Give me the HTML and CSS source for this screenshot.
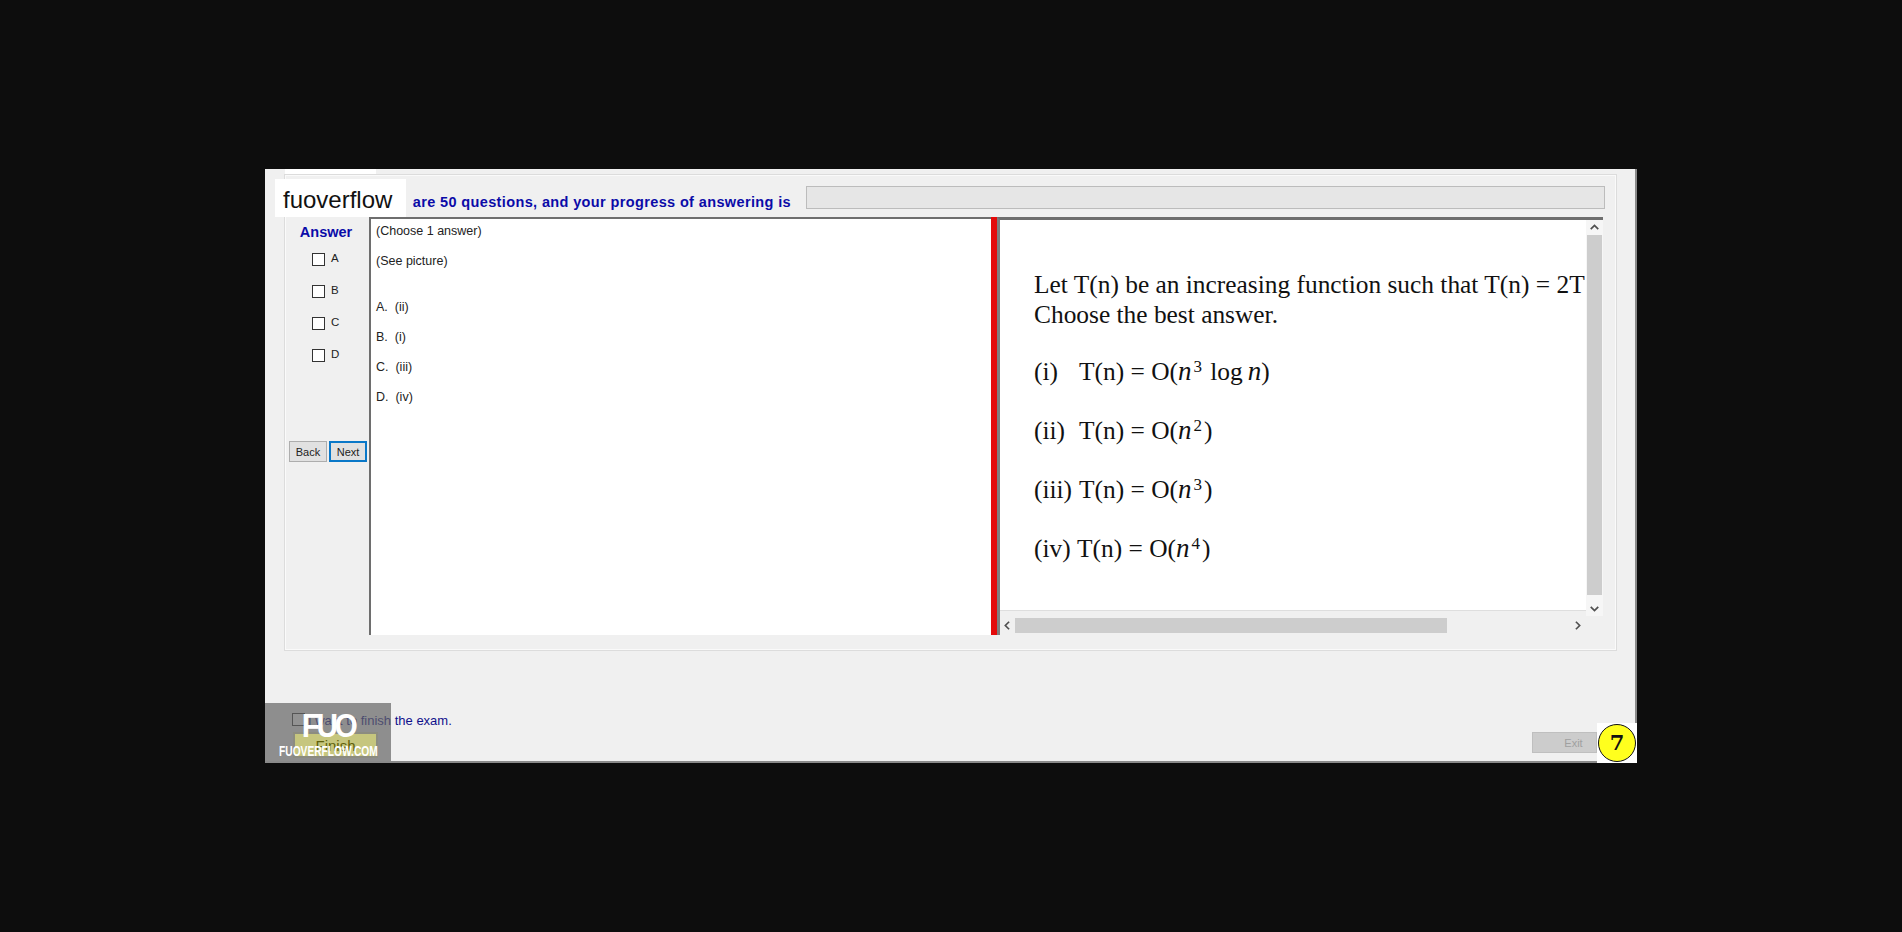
FILE: index.html
```html
<!DOCTYPE html>
<html lang="en">
<head>
    <meta charset="UTF-8">
    <title>Exam</title>
    <link rel="stylesheet" href="styles.css">
</head>
<body>
    <div class="window">
        <div class="tabs"><div class="tab"></div></div>
        <div class="panel">
            <div class="top-row">
                <h1 class="progress-title">are 50 questions, and your progress of answering is</h1>
                <div class="progress"></div>
            </div>
            <div class="main-row">
                <div class="answers">
                    <div class="answers-title">Answer</div>
                    <label class="option"><span class="box"></span>A</label>
                    <label class="option"><span class="box"></span>B</label>
                    <label class="option"><span class="box"></span>C</label>
                    <label class="option"><span class="box"></span>D</label>
                    <div class="nav">
                        <button class="btn">Back</button>
                        <button class="btn btn-active">Next</button>
                    </div>
                </div>
                <div class="question">
                    <p>(Choose 1 answer)</p>
                    <p>(See picture)</p>
                    <p class="first-choice">A.&nbsp; (ii)</p>
                    <p>B.&nbsp; (i)</p>
                    <p>C.&nbsp; (iii)</p>
                    <p>D.&nbsp; (iv)</p>
                </div>
                <div class="splitter"></div>
                <div class="picture-pane">
                    <div class="picture-view">
                        <div class="picture">
                            <div class="intro">Let T(n) be an increasing function such that T(n) = 2T<br>Choose the best answer.</div>
                            <div class="math"><span class="tag">(i)</span>T(n) = O(<i>n</i><sup>3</sup> log&#8201;<i>n</i>)</div>
                            <div class="math"><span class="tag">(ii)</span>T(n) = O(<i>n</i><sup>2</sup>)</div>
                            <div class="math"><span class="tag">(iii)</span>T(n) = O(<i>n</i><sup>3</sup>)</div>
                            <div class="math"><span class="tag tag-narrow">(iv)</span>T(n) = O(<i>n</i><sup>4</sup>)</div>
                        </div>
                        <div class="vscroll">
                            <svg class="arrow" viewBox="-2 -2 14 14"><path d="M1.5 6.5 5 3l3.5 3.5"/></svg>
                            <div class="vthumb"></div>
                            <svg class="arrow arrow-down" viewBox="-2 -2 14 14"><path d="M1.5 3.5 5 7l3.5-3.5"/></svg>
                        </div>
                    </div>
                    <div class="hscroll">
                        <svg class="arrow" viewBox="-2 -2 14 14"><path d="M6.5 1.5 3 5l3.5 3.5"/></svg>
                        <div class="htrack"><div class="hthumb"></div></div>
                        <svg class="arrow" viewBox="-2 -2 14 14"><path d="M3.5 1.5 7 5 3.5 8.5"/></svg>
                    </div>
                </div>
            </div>
        </div>
        <div class="bottom">
            <div class="finish-col">
                <label class="finish-check"><span class="box"></span>I want to finish the exam.</label>
                <button class="btn-finish">Finish</button>
            </div>
            <button class="btn-exit" disabled>Exit</button>
        </div>

        <div class="brand">fuoverflow</div>
        <div class="stamp">
            <div class="stamp-logo">FUO</div>
            <div class="stamp-url">FUOVERFLOW.COM</div>
        </div>
        <div class="badge-box"><div class="badge">7</div></div>
    </div>
</body>
</html>
```

FILE: styles.css
```css
body {
    margin: 0;
    background-color: #0d0d0d;
    font-family: "Liberation Sans", Arial, sans-serif;
    overflow: hidden;
}
.window {
    position: relative;
    box-sizing: border-box;
    width: 1372px;
    height: 594px;
    margin: 169px 0 0 265px;
    background-color: #f0f0f0;
    border-right: 2px solid #8a8a8a;
    border-bottom: 2px solid #8a8a8a;
}
.tabs {
    height: 5px;
    padding-left: 20px;
}
.tab {
    width: 91px;
    height: 6px;
    background-color: #fff;
}
.panel {
    box-sizing: border-box;
    width: 1333px;
    height: 477px;
    margin-left: 19px;
    border: 1px solid #dcdcdc;
    box-shadow: inset 0 0 0 1px #fafafa;
}
.top-row {
    display: flex;
    height: 42px;
    padding-right: 11px;
}
.progress-title {
    flex: 1;
    margin: 19px 15px 0 0;
    color: #0b0ba8;
    font-size: 14.5px;
    letter-spacing: 0.37px;
    line-height: 16px;
    text-align: right;
    white-space: nowrap;
}
.progress {
    box-sizing: border-box;
    width: 799px;
    height: 23px;
    margin-top: 11px;
    background-color: #e6e6e6;
    border: 1px solid #bcbcbc;
}
.main-row {
    display: flex;
    height: 418px;
}
.answers {
    box-sizing: border-box;
    width: 84px;
    padding: 7px 0 0 4px;
}
.answers-title {
    width: 74px;
    color: #0b0ba8;
    font-size: 14.5px;
    font-weight: bold;
    line-height: 16px;
    text-align: center;
}
.option {
    display: flex;
    gap: 6px;
    height: 32px;
    padding-left: 23px;
    color: #222;
    font-size: 11.5px;
    line-height: 11px;
}
.answers-title + .option {
    margin-top: 13px;
}
.box {
    box-sizing: border-box;
    display: block;
    width: 13px;
    height: 13px;
    background-color: #fff;
    border: 1px solid #333;
}
.nav {
    display: flex;
    gap: 2px;
    margin-top: 60px;
}
.btn {
    box-sizing: border-box;
    width: 38px;
    height: 21px;
    padding: 0;
    background-color: #e1e1e1;
    border: 1px solid #adadad;
    color: #222;
    font-family: inherit;
    font-size: 11px;
}
.btn-active {
    border: 2px solid #0a78c8;
}
.question {
    box-sizing: border-box;
    width: 622px;
    padding: 5px 0 0 5px;
    background-color: #fff;
    border-top: 2px solid #6e6e6e;
    border-left: 2px solid #6e6e6e;
    color: #222;
    font-size: 12.5px;
}
.question p {
    height: 30px;
    margin: 0;
    line-height: 14px;
}
.question .first-choice {
    margin-top: 16px;
}
.splitter {
    width: 6px;
    background-color: #e30b0b;
}
.picture-pane {
    box-sizing: border-box;
    width: 606px;
    border-top: 3px solid #6e6e6e;
    border-left: 3px solid #7e7e7e;
}
.picture-view {
    display: flex;
    height: 390px;
}
.picture {
    box-sizing: border-box;
    width: 586px;
    padding: 49px 0 0 34px;
    background-color: #fff;
    color: #111;
    font-family: "Liberation Serif", "Times New Roman", serif;
    font-size: 25.4px;
    white-space: nowrap;
    overflow: hidden;
}
.intro {
    line-height: 30px;
}
.math {
    margin-top: 29px;
    line-height: 30px;
}
.intro + .math {
    margin-top: 27px;
}
.math i {
    font-size: 27px;
}
.math sup {
    margin: 0 2px 0 2px;
    font-size: 17px;
    line-height: 0;
    vertical-align: 8px;
}
.tag {
    display: inline-block;
    width: 45px;
}
.tag-narrow {
    width: 43px;
}
.vscroll {
    display: flex;
    flex-direction: column;
    align-items: center;
    width: 17px;
    height: 396px;
    background-color: #f6f6f6;
}
.vthumb {
    flex: none;
    width: 15px;
    height: 360px;
    background-color: #cdcdcd;
}
.arrow {
    display: block;
    flex: none;
    width: 15px;
    height: 15px;
    fill: none;
    stroke: #505050;
    stroke-width: 1.6;
}
.arrow-down {
    margin-top: 6px;
}
.hscroll {
    display: flex;
    align-items: center;
    box-sizing: border-box;
    width: 586px;
    height: 25px;
    padding-top: 5px;
    border-top: 1px solid #dedede;
}
.htrack {
    width: 555px;
}
.hthumb {
    width: 432px;
    height: 15px;
    background-color: #cdcdcd;
}
.bottom {
    display: flex;
    justify-content: space-between;
    align-items: flex-end;
    box-sizing: border-box;
    height: 110px;
    padding: 0 38px 8px 27px;
}
.finish-check {
    display: flex;
    gap: 3px;
    color: #10108c;
    font-size: 13px;
    line-height: 16px;
}
.btn-finish {
    position: relative;
    z-index: 1;
    display: block;
    box-sizing: border-box;
    width: 85px;
    height: 26px;
    margin: 3px 0 -5px 1px;
    padding: 0;
    background-color: #c6c67e;
    border: 2px solid #8c8c80;
    color: #60600a;
    font-family: inherit;
    font-size: 15px;
}
.btn-exit {
    box-sizing: border-box;
    width: 65px;
    height: 21px;
    padding: 0 0 0 18px;
    background-color: #cccccc;
    border: 1px solid #bfbfbf;
    color: #a0a0a0;
    font-family: inherit;
    font-size: 11px;
}
.brand {
    position: absolute;
    left: 10px;
    top: 10px;
    width: 131px;
    height: 38px;
    padding: 2px 0 0 8px;
    box-sizing: border-box;
    background-color: #fff;
    color: #111;
    font-size: 24px;
    line-height: 38px;
}
.stamp {
    position: absolute;
    left: 0;
    bottom: 0;
    width: 126px;
    height: 58px;
    background-color: rgba(100, 100, 100, 0.7);
    color: #fff;
    text-align: center;
}
.stamp-logo {
    position: relative;
    z-index: 2;
    height: 39px;
    padding-top: 4px;
    box-sizing: border-box;
    font-size: 34px;
    font-weight: bold;
    line-height: 36px;
    letter-spacing: -4px;
    transform: scaleX(0.88);
}
.stamp-url {
    position: relative;
    left: -3px;
    z-index: 2;
    font-size: 14px;
    font-weight: bold;
    line-height: 18px;
    white-space: nowrap;
    transform: scaleX(0.73);
}
.badge-box {
    position: absolute;
    right: -2px;
    bottom: -2px;
    width: 40px;
    height: 40px;
    padding-top: 1px;
    box-sizing: border-box;
    background-color: #fff;
}
.badge {
    box-sizing: border-box;
    width: 38px;
    height: 38px;
    margin-left: 1px;
    background-color: #ffff1e;
    border: 1px solid #111;
    border-radius: 50%;
    color: #111;
    font-family: "DejaVu Serif", serif;
    font-size: 21px;
    font-weight: bold;
    line-height: 36px;
    text-align: center;
}
```
